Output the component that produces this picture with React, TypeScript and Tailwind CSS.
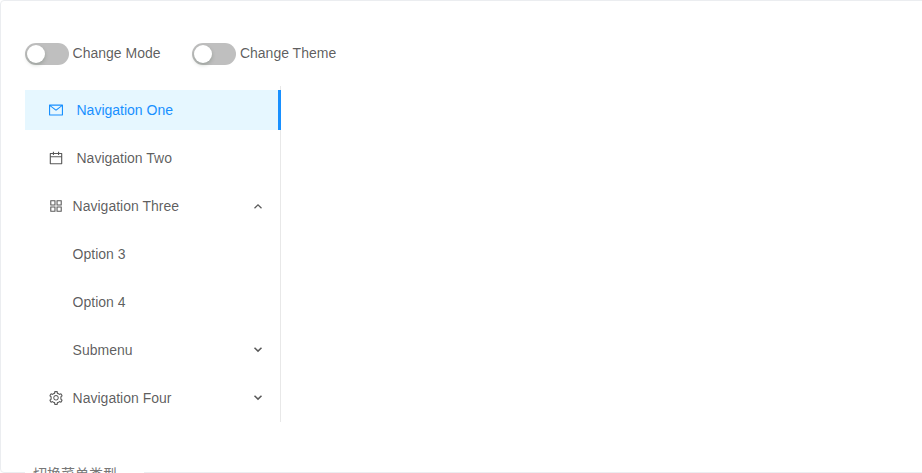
import type { ReactNode } from "react";
import { AiOutlineMail, AiOutlineCalendar, AiOutlineAppstore, AiOutlineSetting } from "react-icons/ai";

const iconBox = "64 64 896 896";

function Toggle({ label }: { label: string }) {
  return (
    <div className="flex h-[22px]">
      <button
        type="button"
        role="switch"
        aria-checked="false"
        aria-label={label}
        className="h-[22px] w-11 rounded-full bg-[#bfbfbf] p-0.5"
      >
        <span className="block size-[18px] rounded-full bg-white shadow-[0_2px_4px_rgba(0,35,11,0.2)]" />
      </button>
      <span className="-mt-px ml-[3.6px] leading-[22px]">{label}</span>
    </div>
  );
}

function Arrow({ open = false }: { open?: boolean }) {
  return (
    <svg
      viewBox="0 0 10 10"
      className="mr-[17px] size-2.5"
      fill="none"
      stroke="currentColor"
      strokeWidth={open ? 1.3 : 1.5}
    >
      <path d={open ? "M1.5 7.3 5 3.9 8.5 7.3" : "M1.5 2.7 5 6.1 8.5 2.7"} />
    </svg>
  );
}

type ItemProps = {
  children: string;
  icon?: ReactNode;
  wide?: boolean;
  selected?: boolean;
  arrow?: "open" | "closed";
};

function Item({ children, icon, wide, selected, arrow }: ItemProps) {
  return (
    <li
      className={
        selected
          ? "-mr-px flex h-10 items-center border-r-[3px] border-[#1890ff] bg-[#e6f7ff] pl-6 text-[#1890ff]"
          : "flex h-10 items-center pl-6"
      }
    >
      <span className="size-3.5 shrink-0">{icon}</span>
      <span className={wide ? "ml-[13.5px] flex-1" : "ml-[9.6px] flex-1"}>{children}</span>
      {arrow && <Arrow open={arrow === "open"} />}
    </li>
  );
}

export default function App() {
  return (
    <div className="h-[473px] w-full overflow-hidden bg-white font-['Liberation_Sans','Noto_Sans_CJK_SC',sans-serif] text-sm text-black/65">
      <section className="relative h-[473px] w-[940px] rounded-sm border border-[#ebedf0] px-6 pt-[42px]">
        <div className="flex gap-[31.8px]">
          <Toggle label="Change Mode" />
          <Toggle label="Change Theme" />
        </div>
        <ul className="mt-[21px] flex h-[336px] w-64 flex-col gap-2 border-r border-[#e8e8e8] py-1">
          <Item icon={<AiOutlineMail viewBox={iconBox} />} wide selected>Navigation One</Item>
          <Item icon={<AiOutlineCalendar viewBox={iconBox} />} wide>Navigation Two</Item>
          <Item icon={<AiOutlineAppstore viewBox={iconBox} />} arrow="open">Navigation Three</Item>
          <Item>Option 3</Item>
          <Item>Option 4</Item>
          <Item arrow="closed">Submenu</Item>
          <Item icon={<AiOutlineSetting viewBox={iconBox} />} arrow="closed">Navigation Four</Item>
        </ul>
        <h3 className="absolute top-[461px] left-6 h-6 w-[119px] bg-white pl-2 leading-6 whitespace-nowrap text-[#777777]">
          切换菜单类型
        </h3>
      </section>
    </div>
  );
}
